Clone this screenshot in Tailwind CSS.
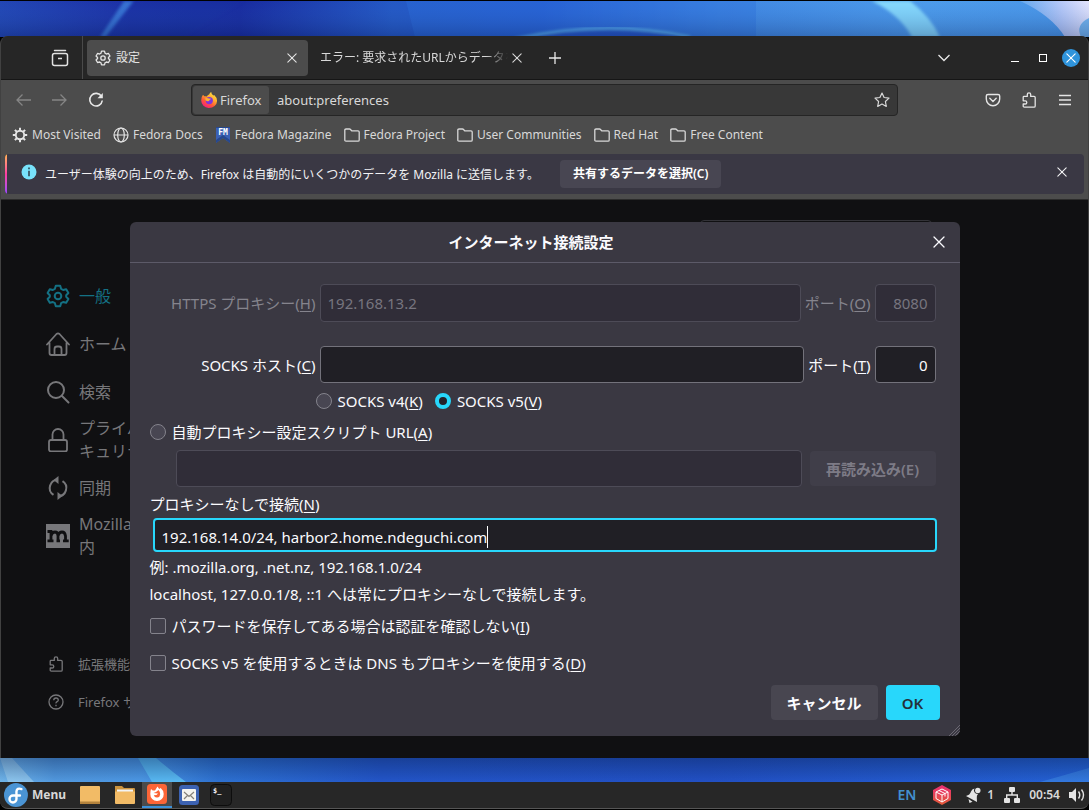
<!DOCTYPE html>
<html lang="ja">
<head>
<meta charset="utf-8">
<meta name="viewport" content="width=device-width, initial-scale=1">
<title>設定</title>
<script src="https://cdn.jsdelivr.net/npm/@tailwindcss/browser@4"></script>
</head>
<body class="flex min-h-screen flex-col bg-black font-['Noto_Sans','Noto_Sans_CJK_JP',sans-serif] text-[13px] leading-5 text-[#d8d8d8]">
<svg width="0" height="0" class="absolute" aria-hidden="true">
  <defs>
    <symbol id="gear" viewBox="0 0 24 24"><path fill="none" stroke="currentColor" stroke-width="2" stroke-linejoin="round" d="M9.8 1.7h4.4l.9 3.1 2 1.2 3.1-.8 2.2 3.8L20.200 11.300v1.400l2.200 2.300-2.200 3.800-3.100-.8-2 1.200-.9 3.100H9.800l-.9-3.100-2-1.200-3.100.8L1.600 15l2.200-2.300v-1.400L1.600 9l2.200-3.800 3.100.8 2-1.200z"/><circle cx="12" cy="12" r="3.300" fill="none" stroke="currentColor" stroke-width="2"/></symbol>
    <symbol id="x" viewBox="0 0 12 12"><path d="M1 1l10 10M11 1L1 11" fill="none" stroke="currentColor" stroke-width="1.300" stroke-linecap="round"/></symbol>
    <symbol id="folder" viewBox="0 0 16 16"><path fill="none" stroke="currentColor" stroke-width="1.300" stroke-linejoin="round" d="M.8 13V3.200q0-1.200 1.200-1.200h3.500q.6 0 1 .5l1.200 1.300H14q1.200 0 1.200 1.200v8q0 1.200-1.200 1.200H2Q.8 14.200.8 13z"/></symbol>
    <symbol id="puzzle" viewBox="0 0 16 16"><path fill="none" stroke="currentColor" stroke-width="1.300" stroke-linejoin="round" d="M2.200 6V5.200q0-.8.8-.8h3.300V2.600a1.700 1.700 0 013.400 0v1.800H13q1.200 0 1.200 1.200V14q0 1.200-1.200 1.200H3.400q-1.200 0-1.200-1.200v-2h2a1.600 1.600 0 000-3.200h-2z"/></symbol>
  </defs>
</svg>

<!-- wallpaper above the window -->
<div class="h-9 shrink-0 pt-px">
  <svg class="block h-9 w-full" viewBox="0 0 1089 36" preserveAspectRatio="none" aria-hidden="true">
    <defs>
      <linearGradient id="w1"><stop offset="0" stop-color="#2246b4"/><stop offset=".12" stop-color="#1c2fa4"/><stop offset=".22" stop-color="#182a9e"/><stop offset=".36" stop-color="#2458c4"/><stop offset=".5" stop-color="#2459cf"/><stop offset=".66" stop-color="#4087e2"/><stop offset=".85" stop-color="#4d9bea"/><stop offset="1" stop-color="#4a97e8"/></linearGradient>
      <linearGradient id="w2"><stop offset="0" stop-color="#65a9ee"/><stop offset=".6" stop-color="#b7c9f8"/><stop offset="1" stop-color="#e4e4fc"/></linearGradient>
      <linearGradient id="w3" x1="0" x2="0" y1="0" y2="1"><stop offset="0" stop-color="#3a7ce0" stop-opacity="0"/><stop offset="1" stop-color="#071a50" stop-opacity=".3"/></linearGradient>
      <filter id="soft"><feGaussianBlur stdDeviation="1.500"/></filter>
    </defs>
    <rect width="1089" height="36" fill="url(#w1)"/>
    <path d="M124 0h10L106 36h-6z" fill="#3f86e0" opacity=".75" filter="url(#soft)"/>
    <path d="M134 0h110l-60 36h-78z" fill="#1730a0" opacity=".3" filter="url(#soft)"/>
    <path d="M406 0h350v36H415z" fill="#2d70dc" opacity=".4"/>
    <path d="M540 34Q610 20 682 35v4H530z" fill="#2454c4"/>
    <path d="M515 38Q605 18 690 36" fill="none" stroke="#60bdf2" stroke-width="2.500" filter="url(#soft)"/>
    <path d="M872 0h38q20 15 30 36h-28Q900 14 872 0z" fill="#86d9fc" filter="url(#soft)"/>
    <path d="M1020 0h69v36h-24q-14-22-45-36z" fill="url(#w2)"/>
    <path d="M1089 17q-14 7-8 19h8z" fill="#76b7ef"/>
    <rect width="1089" height="36" fill="url(#w3)"/>
  </svg>
</div>

<!-- browser window -->
<section class="relative flex grow flex-col overflow-hidden rounded-t-lg border-x border-[#414141] bg-[#4c4c4c]">
  <header class="flex h-11 shrink-0 items-center border-b border-[#161616] bg-[#262626] pr-2">
    <button class="ml-[50px] mr-[13px]" aria-label="最近の履歴">
      <svg class="size-[18px]" viewBox="0 0 18 18" fill="none" stroke="#e2e2e2" stroke-width="1.500"><path d="M3.500 1.500h11" stroke-linecap="round"/><rect x="1.500" y="4.500" width="15" height="12" rx="2"/><path d="M7 9.500h4"/></svg>
    </button>
    <div class="h-full w-px bg-[#4a4a4a]"></div>
    <div class="ml-1 flex h-9 w-[221px] items-center rounded bg-[#4c4c4c] px-2 text-[#e4e4e4]">
      <svg class="size-4"><use href="#gear"/></svg>
      <span class="ml-[5px] grow text-[12px]">設定</span>
      <button class="mr-[3px] flex" aria-label="タブを閉じる"><svg class="size-[10px]"><use href="#x"/></svg></button>
    </div>
    <div class="flex h-9 w-[217px] items-center pl-3">
      <span class="mr-1 w-[188px] shrink-0 overflow-hidden text-[12px] whitespace-nowrap mask-r-from-88% mask-r-to-100%">エラー: 要求されたURLからデータを取得</span>
      <button class="flex" aria-label="タブを閉じる"><svg class="size-[10px]"><use href="#x"/></svg></button>
    </div>
    <button class="ml-6" aria-label="新しいタブ"><svg class="size-3" viewBox="0 0 12 12" stroke="#e8e8e8" stroke-width="1.300"><path d="M6 0v12M0 6h12"/></svg></button>
    <div class="grow"></div>
    <button class="mr-[61px]" aria-label="タブ一覧"><svg class="h-2 w-3" viewBox="0 0 12 8" fill="none" stroke="#e8e8e8" stroke-width="1.300"><path d="M.5 1L6 6.500 11.500 1"/></svg></button>
    <button class="mr-5" aria-label="最小化"><svg class="h-2 w-2" viewBox="0 0 8 8"><path d="M0 7.500h8" stroke="#fff"/></svg></button>
    <button class="mr-[15px]" aria-label="最大化"><svg class="size-2" viewBox="0 0 8 8"><rect x=".5" y=".5" width="7" height="7" fill="none" stroke="#fff"/></svg></button>
    <button class="flex size-[18px] items-center justify-center rounded-full bg-[#2f94dc] text-white" aria-label="閉じる"><svg class="size-[10px]"><use href="#x"/></svg></button>
  </header>

  <nav class="flex h-10 shrink-0 items-center pr-[17px] pl-[15px]">
    <button disabled class="mr-[21px]" aria-label="戻る"><svg class="h-3 w-[15px]" viewBox="0 0 15 12" fill="none" stroke="#858585" stroke-width="1.300"><path d="M15 6H1M6.500.5L1 6l5.500 5.500"/></svg></button>
    <button disabled class="mr-[21px]" aria-label="進む"><svg class="h-3 w-[15px]" viewBox="0 0 15 12" fill="none" stroke="#858585" stroke-width="1.300"><path d="M0 6h14M8.500.5L14 6l-5.500 5.500"/></svg></button>
    <button aria-label="再読み込み"><svg class="size-4" viewBox="0 0 16 16" fill="none" stroke="#e8e8e8" stroke-width="1.600"><path d="M13.500 4.500A6.300 6.300 0 1014.300 8.500"/><path d="M14.800 1v5.300H9.500z" fill="#e8e8e8" stroke="none"/></svg></button>
    <div class="mr-[87px] ml-[87px] flex h-8 grow items-center rounded border border-[#252525] bg-[#383838] p-px pr-[7px]">
      <button class="flex h-7 w-[76px] items-center gap-[3px] rounded-[3px] bg-[#4c4c4c] pl-2">
        <svg class="size-4 shrink-0" viewBox="0 0 16 16">
          <defs><linearGradient id="ff" x1=".8" x2=".2" y1="0" y2="1"><stop offset="0" stop-color="#ffe64a"/><stop offset=".35" stop-color="#ffb02e"/><stop offset=".65" stop-color="#ff5a36"/><stop offset="1" stop-color="#f5128a"/></linearGradient></defs>
          <path fill="url(#ff)" d="M2 2.700l1.300 1.600q1.300-.4 2.500.2Q7 2.700 8.200 2.500q.4-1.600 2-2.500 0 2 2 3.400l1-.3q3 2.700 2.800 6.200A8 6.800 0 018 16 7.600 7.600 0 01.200 8.300Q.300 4.500 2 2.700z"/>
          <circle cx="8.300" cy="8.600" r="3.600" fill="#7d35dc"/><path fill="#ffb22c" d="M4.200 6.200q2.200-.8 4 .4l2 .2-1.800 1.500q-.3 1.300-2 .9l-1.800-.6z"/>
        </svg>
        <span>Firefox</span>
      </button>
      <input aria-label="アドレス" value="about:preferences" class="ml-2 min-w-0 grow bg-transparent text-[#d8d8d8] outline-none">
      <button aria-label="ブックマーク"><svg class="size-4" viewBox="0 0 16 16"><path fill="none" stroke="#d8d8d8" stroke-width="1.200" stroke-linejoin="round" d="M8 1l2.100 4.500 4.900.600-3.600 3.400.9 4.900L8 12l-4.300 2.400.9-4.900L1 6.100l4.900-.6z"/></svg></button>
    </div>
    <div class="flex items-center gap-5 text-[#e4e4e4]">
      <button aria-label="Pocket"><svg class="size-4" viewBox="0 0 16 16" fill="none" stroke="currentColor" stroke-width="1.400"><path d="M3 2.500h10q1.700 0 1.700 1.600V7a6.700 6.700 0 01-13.400 0V4.100q0-1.600 1.700-1.600z"/><path d="M4.800 6.300L8 9.500l3.200-3.200" stroke-linecap="round"/></svg></button>
      <button aria-label="拡張機能"><svg class="size-4"><use href="#puzzle"/></svg></button>
      <button class="ml-[2px]" aria-label="メニュー"><svg class="h-3 w-3" viewBox="0 0 12 12" stroke="currentColor" stroke-width="1.300"><path d="M0 1.500h12M0 6h12M0 10.500h12"/></svg></button>
    </div>
  </nav>

  <nav class="flex h-[30px] shrink-0 items-center gap-3 pl-[11px] text-[12px] whitespace-nowrap">
    <a href="#" class="flex items-center gap-1"><svg class="size-4" viewBox="0 0 16 16" fill="none" stroke="#e4e4e4"><circle cx="8" cy="8" r="4.200" stroke-width="1.900"/><path stroke-width="2" d="M8 .8v3M8 12.200v3M.8 8h3M12.200 8h3M2.900 2.900L5 5M11 11l2.100 2.100M2.900 13.100L5 11M11 5l2.100-2.100"/></svg>Most Visited</a>
    <a href="#" class="flex items-center gap-1"><svg class="size-4" viewBox="0 0 16 16" fill="none" stroke="#e4e4e4" stroke-width="1.200"><circle cx="8" cy="8" r="7"/><ellipse cx="8" cy="8" rx="3.300" ry="7"/><path d="M1 8h14"/></svg>Fedora Docs</a>
    <a href="#" class="flex items-center gap-1"><svg class="size-4" viewBox="0 0 16 16"><path fill="#3a60b4" d="M1 0h14v16l-7-5-7 5z"/><path fill="#27488e" d="M1 0h14v1H1zM1 13l7-5 7 5v3l-7-5-7 5z"/><text x="8" y="8" text-anchor="middle" fill="#fff" class="font-['DejaVu_Sans_Mono'] text-[8px] font-bold">FM</text></svg>Fedora Magazine</a>
    <a href="#" class="flex items-center gap-1"><svg class="size-4"><use href="#folder"/></svg>Fedora Project</a>
    <a href="#" class="flex items-center gap-1"><svg class="size-4"><use href="#folder"/></svg>User Communities</a>
    <a href="#" class="flex items-center gap-1"><svg class="size-4"><use href="#folder"/></svg>Red Hat</a>
    <a href="#" class="flex items-center gap-1"><svg class="size-4"><use href="#folder"/></svg>Free Content</a>
  </nav>

  <div class="m-1 mb-[5px] flex h-10 shrink-0 items-center overflow-hidden rounded bg-[#3a3844] text-[12px] text-[#f2f2f4]">
    <div class="h-full w-[2px] bg-linear-to-b from-[#ffb347] via-[#ff3aa0] to-[#9a45ff]"></div>
    <svg class="mb-1 ml-[14px] size-4" viewBox="0 0 16 16"><circle cx="8" cy="8" r="7.500" fill="#78e2fb"/><path d="M8 3.500v1.700M8 6.700v5.500" stroke="#25303a" stroke-width="1.400"/></svg>
    <p class="mt-px ml-2 whitespace-nowrap">ユーザー体験の向上のため、Firefox は自動的にいくつかのデータを Mozilla に送信します。</p>
    <button class="ml-[21px] h-7 rounded bg-[#484652] px-[13px] font-semibold whitespace-nowrap text-white">共有するデータを選択(C)</button>
    <button class="mr-[17px] mb-1 ml-auto" aria-label="閉じる"><svg class="size-[10px]"><use href="#x"/></svg></button>
  </div>

  <main class="relative flex grow border-t border-[#2c2c2c] bg-[#101012] text-[16px] text-[#77777a]">
    <aside class="flex w-[200px] flex-col pt-[78px] pl-[45px] leading-[23px]">
      <a href="#" class="flex h-9 items-center gap-[9px] text-[#147184]"><svg class="size-6"><use href="#gear"/></svg>一般</a>
      <a href="#" class="mt-3 flex h-9 items-center gap-[9px]"><svg class="size-6" viewBox="0 0 24 24" fill="none" stroke="currentColor" stroke-width="1.800" stroke-linecap="round" stroke-linejoin="round"><path d="M1 12.500L10.500 2q1.500-1.300 3 0L23 12.500M3.500 10.500V21q0 2 2 2h13q2 0 2-2V10.500M8.500 23v-6q0-2.500 2.500-2.500h2q2.500 0 2.500 2.500v6"/></svg>ホーム</a>
      <a href="#" class="mt-3 flex h-9 items-center gap-[9px]"><svg class="size-6" viewBox="0 0 24 24" fill="none" stroke="currentColor" stroke-width="2" stroke-linecap="round"><circle cx="10" cy="10" r="8"/><path d="M16 16l6.500 6.500"/></svg>検索</a>
      <a href="#" class="mt-[6px] flex h-12 items-center gap-[9px] whitespace-nowrap"><svg class="size-6 shrink-0" viewBox="0 0 24 24" fill="none" stroke="currentColor" stroke-width="1.800"><rect x="3" y="12" width="18" height="11.500" rx="2"/><path d="M6.500 12V6.500a5.500 5.500 0 0111 0V12"/></svg><span>プライバシーとセ<br>キュリティ</span></a>
      <a href="#" class="mt-[6px] flex h-9 items-center gap-[9px]"><svg class="size-6" viewBox="0 0 24 24" fill="none" stroke="currentColor" stroke-width="2"><path d="M7.500 18.900A8.200 8.200 0 0112 3.800M16.500 5.100A8.200 8.200 0 0112 20.200"/><path d="M12.500 0v8L7.500 4zM11.500 16v8l5-4z" fill="currentColor" stroke="none"/></svg>同期</a>
      <a href="#" class="mt-[6px] flex h-12 items-center gap-[9px] whitespace-nowrap"><svg class="size-6 shrink-0" viewBox="0 0 24 24"><path fill="currentColor" d="M0 0h24v24H0z"/><path fill="none" stroke="#101012" stroke-width="2.800" d="M1.500 7.500H5v9M1.500 16.800h6M5 12q1-4 4-4t3 4v5M12 12q1-4 4-4t3.500 4v5M10.500 16.800h3.500M17 16.800h5.700"/></svg><span>Mozilla の製品案<br>内</span></a>
      <div class="mt-[85px] flex flex-col text-[13px] whitespace-nowrap">
        <a href="#" class="flex h-[38px] items-center gap-[14px] pl-[2px]"><svg class="size-4"><use href="#puzzle"/></svg>拡張機能とテーマ</a>
        <a href="#" class="flex h-[38px] items-center gap-[14px] pl-[2px]"><svg class="size-4" viewBox="0 0 16 16" fill="none" stroke="currentColor" stroke-width="1.300"><circle cx="8" cy="8" r="7"/><path d="M5.700 6.200q.2-2.200 2.300-2.200t2.300 2q0 1.100-1.200 1.700T8 9.400M8 10.800v1.400"/></svg>Firefox サポート</a>
      </div>
    </aside>
    <div class="mt-5 mr-[156px] ml-auto h-8 w-[232px] rounded border border-[#333338]"></div>

    <div class="absolute inset-0 flex items-center justify-center">
      <form role="dialog" aria-labelledby="dlg" class="relative flex w-[830px] flex-col overflow-hidden rounded-md bg-[#3a3842] text-[15px] leading-[22px] text-[#fbfbfe]">
        <div class="flex h-[41px] items-center border-b border-[#5c5a68] pr-[15px]">
          <h1 id="dlg" class="grow text-center text-[15px] font-bold">インターネット接続設定</h1>
          <button type="button" aria-label="閉じる"><svg class="size-3"><use href="#x"/></svg></button>
        </div>
        <div class="flex flex-col pt-[21px] pr-6 pb-4 pl-5">
          <div class="flex items-center gap-1 text-[#85848d]">
            <label for="hp" class="w-[166px] text-right whitespace-nowrap">HTTPS プロキシー(<u class="underline-offset-2">H</u>)</label>
            <input id="hp" disabled value="192.168.13.2" class="h-[38px] min-w-0 grow rounded border border-[#4d4b57] bg-[#302d38] px-[7px] text-[#77757f]">
            <label for="hpp">ポート(<u class="underline-offset-2">O</u>)</label>
            <input id="hpp" disabled value="8080" class="h-[38px] w-[61px] rounded border border-[#4d4b57] bg-[#302d38] px-[7px] text-right text-[#77757f]">
          </div>
          <div class="mt-6 flex items-center gap-1">
            <label for="sh" class="w-[166px] text-right whitespace-nowrap">SOCKS ホスト(<u class="underline-offset-2">C</u>)</label>
            <input id="sh" class="h-[37px] min-w-0 grow rounded border border-[#73727b] bg-[#201f25] px-[7px]">
            <label for="shp">ポート(<u class="underline-offset-2">T</u>)</label>
            <input id="shp" value="0" class="h-[37px] w-[61px] rounded border border-[#73727b] bg-[#201f25] px-[7px] text-right">
          </div>
          <div class="mt-[7px] ml-[166px] flex items-center gap-3">
            <label class="flex items-center gap-[6px]"><input type="radio" name="v" class="size-4 appearance-none rounded-full border border-[#84838c] bg-[#484652] checked:border-[4px] checked:border-[#28d7fb] checked:bg-[#23222b]"><span>SOCKS v4(<u class="underline-offset-2">K</u>)</span></label>
            <label class="flex items-center gap-[6px]"><input type="radio" name="v" checked class="size-4 appearance-none rounded-full border border-[#84838c] bg-[#484652] checked:border-[4px] checked:border-[#28d7fb] checked:bg-[#23222b]"><span>SOCKS v5(<u class="underline-offset-2">V</u>)</span></label>
          </div>
          <label class="mt-[9px] flex items-center gap-[6px]"><input type="radio" name="mode" class="size-4 appearance-none rounded-full border border-[#84838c] bg-[#484652]"><span>自動プロキシー設定スクリプト URL(<u class="underline-offset-2">A</u>)</span></label>
          <div class="mt-[7px] ml-[26px] flex items-center gap-2">
            <input aria-label="自動プロキシー設定スクリプト URL" disabled class="h-[37px] min-w-0 grow rounded border border-[#4d4b57] bg-[#302d38]">
            <button type="button" disabled class="h-[35px] w-[126px] rounded bg-[#403e49] font-semibold text-[#7d7b86]">再読み込み(E)</button>
          </div>
          <label for="np" class="mt-[6px]">プロキシーなしで接続(<u class="underline-offset-2">N</u>)</label>
          <div class="mt-[3px] mr-[-1px] ml-[3px] flex h-[34px] items-center rounded border-2 border-[#28d7fb] bg-[#201f25] px-[7px] pt-1">
            <input id="np" value="192.168.14.0/24, harbor2.home.ndeguchi.com" class="field-sizing-content bg-transparent outline-none"><span class="h-[22px] w-px bg-white"></span>
          </div>
          <p class="mt-1">例: .mozilla.org, .net.nz, 192.168.1.0/24</p>
          <p class="mt-[5px]">localhost, 127.0.0.1/8, ::1 へは常にプロキシーなしで接続します。</p>
          <label class="mt-[10px] flex items-center gap-[6px]"><input type="checkbox" class="size-4 appearance-none rounded-xs border border-[#84838c] bg-[#413f4a]"><span>パスワードを保存してある場合は認証を確認しない(<u class="underline-offset-2">I</u>)</span></label>
          <label class="mt-[15px] flex items-center gap-[6px]"><input type="checkbox" class="size-4 appearance-none rounded-xs border border-[#84838c] bg-[#413f4a]"><span>SOCKS v5 を使用するときは DNS もプロキシーを使用する(<u class="underline-offset-2">D</u>)</span></label>
          <div class="mt-[11px] mr-[-4px] flex justify-end gap-2 font-semibold">
            <button type="button" class="h-[35px] w-[107px] rounded bg-[#484650]">キャンセル</button>
            <button type="submit" class="h-[35px] w-[54px] rounded bg-[#28d7fb] text-[#24303a]">OK</button>
          </div>
        </div>
        <svg class="absolute right-0 bottom-0 size-3" viewBox="0 0 12 12" stroke="#77757f" stroke-width=".8" aria-hidden="true"><path d="M1 12L12 1M4 12l8-8M7 12l5-5M10 12l2-2"/></svg>
      </form>
    </div>
  </main>
</section>

<!-- wallpaper below the window -->
<svg class="block h-6 w-full shrink-0" viewBox="0 0 1089 24" preserveAspectRatio="none" aria-hidden="true">
  <defs>
    <linearGradient id="b1"><stop offset="0" stop-color="#70b5ea"/><stop offset=".05" stop-color="#5299df"/><stop offset=".13" stop-color="#4c98e5"/><stop offset=".2" stop-color="#2e72d2"/><stop offset=".35" stop-color="#2355c8"/><stop offset=".65" stop-color="#2250c4"/><stop offset="1" stop-color="#2461d4"/></linearGradient>
    <linearGradient id="b2" x1="0" x2="0" y1="0" y2="1"><stop offset="0" stop-color="#082050" stop-opacity=".4"/><stop offset="1" stop-color="#082050" stop-opacity="0"/></linearGradient>
  </defs>
  <rect width="1089" height="24" fill="url(#b1)"/>
  <path d="M0 0h12l22 24H8z" fill="#a4d4f2" opacity=".6"/>
  <path d="M138 0h18q14 12 30 24h-34z" fill="#58b8f2"/>
  <path d="M1040 24q25-7 49-14v14z" fill="#3e88e6" opacity=".6"/>
  <rect width="1089" height="24" fill="url(#b2)"/>
</svg>

<!-- desktop panel -->
<footer class="mb-px flex h-[27px] shrink-0 items-center rounded-b-lg border-b border-[#565656] bg-[#272727] px-1 text-[13px] font-semibold">
  <button class="flex w-[62px] items-center gap-1"><svg class="size-6" viewBox="0 0 24 24"><circle cx="12" cy="12" r="12" fill="#4a94d4"/><path fill="none" stroke="#fff" stroke-width="2.400" stroke-linecap="round" d="M17.500 6q-4.500-1.500-5 2.500v7.500a3.500 3.500 0 11-3.500-3.500h7"/></svg><span class="text-[12px] font-bold">Menu</span></button>
  <button class="ml-[14px]" aria-label="デスクトップ"><svg class="h-5 w-5" viewBox="0 0 20 20"><rect y="1" width="20" height="18" rx="1" fill="#f2bb66"/><path d="M0 16.500h20V19H0z" fill="#b3823c"/></svg></button>
  <button class="ml-[15px]" aria-label="ファイル"><svg class="h-5 w-5" viewBox="0 0 20 20"><path d="M0 1h7l2 2h10q1 0 1 1v14H0z" fill="#cc943f"/><path d="M2 4.500h16v4H2z" fill="#f3f3f3"/><path d="M0 6.500h20V18q0 1-1 1H1q-1 0-1-1z" fill="#f2bb66"/></svg></button>
  <button class="ml-[7px] flex h-[26px] w-[30px] items-center justify-center border-b-2 border-[#3b91da] bg-[#4b4b4b]" aria-label="Firefox"><svg class="size-5" viewBox="0 0 20 20"><rect width="20" height="20" rx="3.500" fill="#fc6537"/><path fill="#fff" d="M4 5l1.700 1.400L8 6.500l2.500-4 1.700 2.500 1.500-1q3 2.500 3 6A6.700 6.700 0 0110 17a6.700 6.700 0 01-6.700-7Q3.300 7 4 5z"/><path fill="#fc6537" d="M6.500 9L9 8l2.500-2q2 2 1.700 4.500a3.300 3.300 0 01-6.400.8l2.700-.3L11 9.500z"/></svg></button>
  <button class="ml-[7px]" aria-label="メール"><svg class="size-5" viewBox="0 0 20 20"><rect width="20" height="20" rx="3.500" fill="#3c62b2"/><rect x="3" y="4" width="14" height="12" rx="1" fill="#f4f3ee"/><path d="M5 7l5 4.500L15 7M5 14l3.500-3.500M15 14l-3.500-3.500" fill="none" stroke="#85817a" stroke-width="1.200"/></svg></button>
  <button class="ml-[11px]" aria-label="端末"><svg class="size-[22px]" viewBox="0 0 22 22"><rect x=".5" y=".5" width="21" height="21" rx="4" fill="#202020" stroke="#0d0d0d"/><text x="3" y="9" fill="#f4f4f4" class="font-['DejaVu_Sans_Mono'] text-[7px] font-bold">$_</text></svg></button>
  <div class="ml-auto flex items-center">
    <span class="mr-4 text-[14px] text-[#4390cf]">EN</span>
    <svg class="mr-[13px] size-5" viewBox="0 0 20 20"><defs><linearGradient id="cb" x2="0" y2="1"><stop stop-color="#ea2e75"/><stop offset="1" stop-color="#e35a38"/></linearGradient></defs><path d="M10 0l9 5v10l-9 5-9-5V5z" fill="url(#cb)"/><path d="M10 4l6 3v6.500L10 17l-6-3.500V7zM4 7l6 3 6-3M10 10v7M7 5.500l6 3v3" fill="none" stroke="#fff"/></svg>
    <svg class="mr-[6px] size-4" viewBox="0 0 16 16" fill="#e4e4e4"><path d="M1 9q4-1 5-4.500Q7 2 9.500 1.500a3.600 3.600 0 003.500 5.500q-1.500 1.500-1.200 4l.2 4zM3.500 12l4 2.700-3 1.300z"/><circle cx="12.800" cy="3.500" r="2.700"/></svg>
    <span class="mr-[10px] text-[12px]">1</span>
    <svg class="mr-[9px] size-4" viewBox="0 0 16 16" fill="#e4e4e4"><rect x="5" width="6" height="5" rx="1"/><rect y="11" width="6" height="5" rx="1"/><rect x="10" y="11" width="6" height="5" rx="1"/><path d="M7.300 4h1.400v3.300H14V12h-1.400V8.700H3.400V12H2V7.300h5.300z"/></svg>
    <time class="mr-[9px] text-[12px]">00:54</time>
    <svg class="size-4" viewBox="0 0 16 16"><path d="M0 5h3l4-4v14l-4-4H0z" fill="#e4e4e4"/><path d="M9.500 4.500q2.500 3.500 0 7M12.500 2.500q4 5.500 0 11" fill="none" stroke="#e4e4e4" stroke-width="1.400"/></svg>
  </div>
</footer>
</body>
</html>
